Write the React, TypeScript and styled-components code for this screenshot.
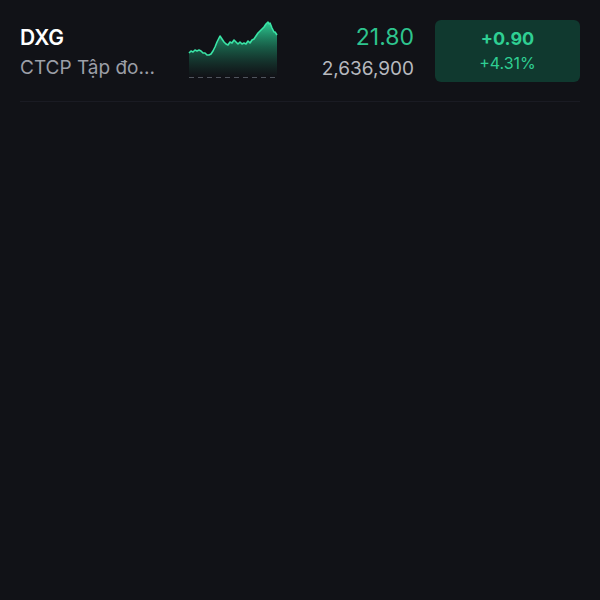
import styled, { createGlobalStyle } from 'styled-components'

const Global = createGlobalStyle`
  html, body {
    margin: 0;
    padding: 0;
    background: #111217;
    font-family: Inter, "Noto Sans", sans-serif;
  }
`

const Page = styled.div`
  width: 600px;
  height: 600px;
  background: #111217;
  padding: 0 20px;
  box-sizing: border-box;
`

const Row = styled.div`
  display: flex;
  align-items: center;
  height: 102px;
  border-bottom: 1px solid #1a1b23;
  box-sizing: border-box;
`

const NameCol = styled.div`
  width: 168px;
  display: flex;
  flex-direction: column;
  gap: 6px;
  margin-top: 2px;
`

const Symbol = styled.div`
  color: #ffffff;
  font-size: 21px;
  font-weight: 600;
`

const Company = styled.div`
  color: #9c9fa7;
  font-size: 19px;
  white-space: nowrap;
`

const ChartWrap = styled.div`
  width: 90px;
  height: 60px;
  margin-top: -2px;
`

const PriceCol = styled.div`
  flex: 1;
  display: flex;
  flex-direction: column;
  align-items: flex-end;
  gap: 6px;
  margin-right: 21px;
  margin-top: 1px;
`

const Price = styled.div`
  color: #2ec48e;
  font-size: 23px;
`

const Volume = styled.div`
  color: #b7b9bf;
  font-size: 19px;
`

const Badge = styled.div`
  width: 145px;
  height: 62px;
  border-radius: 6px;
  background: #10392f;
  display: flex;
  flex-direction: column;
  align-items: center;
  justify-content: center;
  gap: 4px;
`

const Change = styled.div<{ $bold?: boolean }>`
  color: #2fcf93;
  font-size: ${(p) => (p.$bold ? '18px' : '16px')};
  font-weight: ${(p) => (p.$bold ? 700 : 400)};
`

// sparkline samples, x 0..88, y 0 = top of chart, baseline at 57
const pts: [number, number][] = [
  [0, 33], [2, 31], [4, 32], [6, 30], [8, 31], [10, 30], [12, 31], [14, 33],
  [16, 33], [18, 35], [20, 35], [22, 34], [24, 31], [26, 27], [28, 22], [30, 18],
  [31, 16], [33, 19], [35, 22], [37, 24], [39, 25], [41, 22], [43, 23], [45, 20],
  [47, 22], [49, 24], [51, 22], [53, 24], [55, 23], [57, 24], [59, 21], [61, 23],
  [63, 20], [65, 19], [67, 16], [69, 13], [71, 11], [73, 9], [75, 7], [77, 4],
  [78, 3], [79, 2], [80, 4], [81, 3], [83, 8], [85, 12], [86, 12], [88, 15],
]

function Spark() {
  const line = pts.map(([x, y], i) => `${i ? 'L' : 'M'}${x + 1} ${y}`).join(' ')
  const area = `${line} L89 57 L1 57 Z`
  return (
    <svg width="90" height="60" viewBox="0 0 90 60">
      <defs>
        <linearGradient id="fill" x1="0" y1="0" x2="0" y2="1">
          <stop offset="0%" stopColor="#2fd79a" stopOpacity="0.95" />
          <stop offset="45%" stopColor="#1f9c70" stopOpacity="0.55" />
          <stop offset="100%" stopColor="#1a6b50" stopOpacity="0" />
        </linearGradient>
      </defs>
      <path d={area} fill="url(#fill)" />
      <path d={line} fill="none" stroke="#3ae4a6" strokeWidth="1.6" strokeLinejoin="round" />
      <line x1="1" y1="57.5" x2="89" y2="57.5" stroke="#4f545d" strokeWidth="1" strokeDasharray="5 4" />
    </svg>
  )
}

export default function App() {
  return (
    <>
      <Global />
      <Page>
        <Row>
          <NameCol>
            <Symbol>DXG</Symbol>
            <Company>CTCP Tập đo...</Company>
          </NameCol>
          <ChartWrap>
            <Spark />
          </ChartWrap>
          <PriceCol>
            <Price>21.80</Price>
            <Volume>2,636,900</Volume>
          </PriceCol>
          <Badge>
            <Change $bold>+0.90</Change>
            <Change>+4.31%</Change>
          </Badge>
        </Row>
      </Page>
    </>
  )
}
